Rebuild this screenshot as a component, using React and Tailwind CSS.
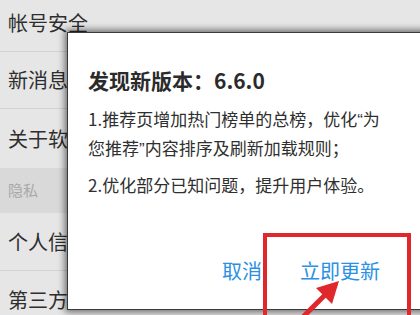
export default function App() {
  const font = { fontFamily: '"Noto Sans CJK SC", "Noto Sans", sans-serif' };
  const q = { fontFamily: '"Liberation Sans", "Noto Sans", sans-serif' };
  return (
    <div className="relative w-[420px] h-[315px] overflow-hidden bg-[#e6e6e6]" style={font}>
      <div className="-mt-[6px] flex flex-col">
        <div className="h-[58px] flex items-center pl-[8px] text-[20px] text-[#2e2e2e] border-b border-[#d2d2d2]">帐号安全</div>
        <div className="h-[57px] flex items-center pl-[8px] border-b border-[#d2d2d2]">
          <span className="w-[59px] overflow-hidden whitespace-nowrap text-[20px] text-[#2e2e2e]">新消息通知</span>
        </div>
        <div className="h-[59px] flex items-center pl-[8px]">
          <span className="w-[59px] overflow-hidden whitespace-nowrap text-[20px] text-[#2e2e2e]">关于软件</span>
        </div>
        <div className="h-[45px] flex items-center pl-[8px] text-[15px] text-[#a8a8a8] bg-[#d9d9d9]">隐私</div>
        <div className="h-[58px] flex items-center pl-[8px] border-b border-[#d2d2d2]">
          <span className="w-[59px] overflow-hidden whitespace-nowrap text-[20px] text-[#2e2e2e]">个人信息</span>
        </div>
        <div className="h-[58px] flex items-center pl-[8px]">
          <span className="w-[59px] overflow-hidden whitespace-nowrap text-[20px] text-[#2e2e2e]">第三方</span>
        </div>
      </div>

      <div className="absolute left-[67px] top-[32px] w-[362px] h-[278px] bg-white border border-[#3a3a3a] shadow-[0_0_7px_2px_rgba(0,0,0,0.55)] flex flex-col pl-[20px] pr-[32px]">
        <div className="mt-[32px] text-[21px] leading-[30px] font-bold text-[#2b2b2b]">发现新版本：6.6.0</div>
        <div className="mt-[10px] text-[17px] leading-[27px] text-[#2f2f2f]">
          1.推荐页增加热门榜单的总榜，优化<span style={q}>“</span>为您推荐<span style={q}>”</span>内容排序及刷新加载规则；
        </div>
        <div className="mt-[8px] text-[17px] leading-[27px] text-[#2f2f2f]">2.优化部分已知问题，提升用户体验。</div>
        <div className="mt-[58px] flex pl-[134px] gap-[38px] text-[20px] leading-[30px] text-[#2a90e4]">
          <span>取消</span>
          <span>立即更新</span>
        </div>
      </div>

      <div className="absolute left-[263px] top-[233px] w-[148px] h-[100px] border-[4px] border-[#e0282c]"></div>
      <svg className="absolute left-0 top-0" width="420" height="315" viewBox="0 0 420 315">
        <line x1="300" y1="320" x2="326" y2="294" stroke="#e0282c" strokeWidth="5" />
        <polygon points="339,281 316,288 332,304" fill="#e0282c" />
      </svg>
    </div>
  );
}
